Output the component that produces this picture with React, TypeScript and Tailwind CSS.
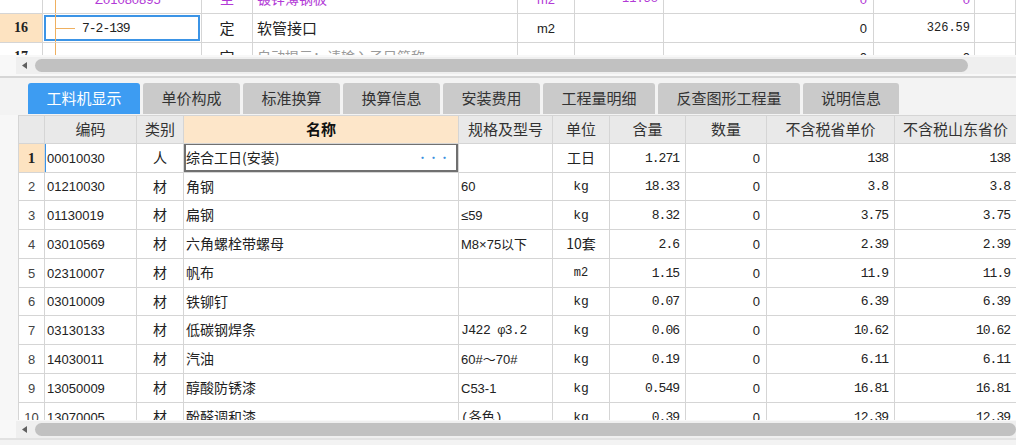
import React from "react";

const cjk = "font-['Noto_Sans_CJK_SC',sans-serif]";
const mono = "font-['Liberation_Mono','Noto_Sans_CJK_SC',monospace]";
const sans = "font-['Liberation_Sans','Noto_Sans_CJK_SC',sans-serif]";

const tabs = [
  { label: "工料机显示", w: "w-[112px]", active: true },
  { label: "单价构成", w: "w-[97px]" },
  { label: "标准换算", w: "w-[97px]" },
  { label: "换算信息", w: "w-[97px]" },
  { label: "安装费用", w: "w-[97px]" },
  { label: "工程量明细", w: "w-[112px]" },
  { label: "反查图形工程量", w: "w-[142px]" },
  { label: "说明信息", w: "w-[96px]" },
];

const rows = [
  ["00010030", "人", "综合工日(安装)", "", "工日", "1.271", "0", "138", "138"],
  ["01210030", "材", "角钢", "60", "kg", "18.33", "0", "3.8", "3.8"],
  ["01130019", "材", "扁钢", "≤59", "kg", "8.32", "0", "3.75", "3.75"],
  ["03010569", "材", "六角螺栓带螺母", "M8×75以下", "10套", "2.6", "0", "2.39", "2.39"],
  ["02310007", "材", "帆布", "", "m2", "1.15", "0", "11.9", "11.9"],
  ["03010009", "材", "铁铆钉", "", "kg", "0.07", "0", "6.39", "6.39"],
  ["03130133", "材", "低碳钢焊条", "J422 φ3.2", "kg", "0.06", "0", "10.62", "10.62"],
  ["14030011", "材", "汽油", "60#～70#", "kg", "0.19", "0", "6.11", "6.11"],
  ["13050009", "材", "醇酸防锈漆", "C53-1", "kg", "0.549", "0", "16.81", "16.81"],
  ["13070005", "材", "酚醛调和漆", "(各色)", "kg", "0.39", "0", "12.39", "12.39"],
];

const rowH = ["h-[29px]", "h-[28px]", "h-[29px]", "h-[29px]", "h-[29px]", "h-[28px]", "h-[29px]", "h-[29px]", "h-[29px]", "h-[29px]"];

const lowerCols =
  "grid grid-cols-[26px_92px_47px_275px_94px_57px_76px_81px_128px_122px]";
const upperCols =
  "grid grid-cols-[43px_159px_51px_265px_57px_89px_210px_101px_41px]";

const cell = "border-r border-b border-[#d5d5d5] flex items-center overflow-hidden whitespace-nowrap leading-none";
const lift = "pb-[2px]";

function ScrollBar({ thumbEnd }: { thumbEnd: string }) {
  return (
    <div className="flex h-[17px]">
      <div className="w-[16px] bg-[#f8f8f8]" />
      <div className="flex flex-1 items-center bg-[#efefef]">
        <svg width="19" height="17" viewBox="0 0 19 17" className="shrink-0">
          <path d="M6 8.5 L11 5 L11 12 Z" fill="#606060" />
        </svg>
        <div className={`h-[13px] rounded-[7px] bg-[#c1c1c1] ${thumbEnd}`} />
      </div>
    </div>
  );
}

function TreeLines({ h }: { h: "deep" | "mid" | "none" }) {
  return (
    <>
      <div className="absolute inset-y-0 left-[12px] border-l border-[#efb060]" />
      {h === "mid" && <div className="absolute left-[12px] top-[14px] w-[20px] border-t border-[#efb060]" />}
      {h === "deep" && <div className="absolute left-[25px] top-[14px] w-[15px] border-t border-[#efb060]" />}
    </>
  );
}

export default function App() {
  return (
    <div className={`h-[445px] w-[1016px] overflow-hidden bg-[#f3f3f3] ${cjk} text-[#222]`}>
      {/* upper grid */}
      <div className="h-[55px] overflow-hidden bg-white">
        <div className="mt-[-15px]">
          {/* row 15 (cut) */}
          <div className={`${upperCols} h-[29px] text-[#b23ad6]`}>
            <div className={`${cell} justify-center bg-white`} />
            <div className={`${cell} relative`}>
              <TreeLines h="deep" />
              <span className={`pl-[52px] text-[13px] ${sans}`}>Z01080895</span>
            </div>
            <div className={`${cell} ${lift} justify-center text-[14px]`}>主</div>
            <div className={`${cell} ${lift} pl-[4px] text-[14px]`}>镀锌薄钢板</div>
            <div className={`${cell} justify-center text-[13px] ${sans}`}>m2</div>
            <div className={`${cell} justify-end pr-[5px] text-[12px] ${mono}`}>11.38</div>
            <div className={`${cell} justify-end pr-[6px] text-[13px] ${sans}`}>0</div>
            <div className={`${cell} justify-end pr-[4px] text-[13px] ${sans}`}>0</div>
            <div className={`${cell}`} />
          </div>
          {/* row 16 */}
          <div className={`${upperCols} h-[29px]`}>
            <div className={`${cell} justify-center bg-[#fde3c1] text-[14px] font-bold font-['Liberation_Serif',serif]`}>16</div>
            <div className={`${cell} relative`}>
              <div className="absolute inset-x-[1px] inset-y-[1px] border-2 border-[#3b94e6]" />
              <TreeLines h="mid" />
              <span className={`pl-[39px] text-[13px] ${mono} tracking-[-1px]`}>7-2-139</span>
            </div>
            <div className={`${cell} ${lift} justify-center text-[15px]`}>定</div>
            <div className={`${cell} ${lift} pl-[4px] text-[15px]`}>软管接口</div>
            <div className={`${cell} justify-center text-[13px] ${sans}`}>m2</div>
            <div className={`${cell}`} />
            <div className={`${cell} justify-end pr-[6px] text-[13px] ${sans}`}>0</div>
            <div className={`${cell} justify-end pr-[4px] text-[12px] ${mono}`}>326.59</div>
            <div className={`${cell}`} />
          </div>
          {/* row 17 (cut) */}
          <div className={`${upperCols} h-[29px]`}>
            <div className={`${cell} justify-center text-[14px] font-bold font-['Liberation_Serif',serif]`}>17</div>
            <div className={`${cell} relative`}>
              <TreeLines h="none" />
            </div>
            <div className={`${cell} ${lift} justify-center text-[15px]`}>定</div>
            <div className={`${cell} ${lift} pl-[4px] text-[14px] text-[#9a9a9a]`}>自动提示：请输入子目简称</div>
            <div className={`${cell}`} />
            <div className={`${cell}`} />
            <div className={`${cell} justify-end pr-[6px] text-[13px] ${sans}`}>0</div>
            <div className={`${cell} justify-end pr-[4px] text-[13px] ${sans}`}>0</div>
            <div className={`${cell}`} />
          </div>
        </div>
      </div>

      <div className="h-[2px] bg-[#f8f8f8]" />
      <ScrollBar thumbEnd="w-[933px]" />
      <div className="h-[2px] bg-[#f8f8f8]" />
      <div className="h-[2px] bg-[#d6d6d6]" />

      {/* tabs */}
      <div className="flex gap-[3px] pl-[28px] pt-[5px]">
        {tabs.map((t) => (
          <div
            key={t.label}
            className={`${t.w} flex h-[31px] items-center justify-center rounded-t-[3px] text-[15px] ${
              t.active ? "bg-[#3d9cf2] text-white" : "bg-[#cacaca] text-[#333]"
            }`}
          >
            {t.label}
          </div>
        ))}
      </div>

      {/* lower grid */}
      <div className="mt-px flex">
        <div className="w-[18px] bg-[#f7f7f7]" />
        <div className="h-[305px] flex-1 overflow-hidden border-l border-t border-[#d5d5d5] bg-white">
          <div className={`${lowerCols} h-[28px] bg-[#e9e9e9] text-[15px] text-[#333]`}>
            <div className={`${cell}`} />
            <div className={`${cell} ${lift} justify-center`}>编码</div>
            <div className={`${cell} ${lift} justify-center`}>类别</div>
            <div className={`${cell} ${lift} justify-center bg-[#fde6c9] font-bold text-[#111]`}>名称</div>
            <div className={`${cell} ${lift} justify-center`}>规格及型号</div>
            <div className={`${cell} ${lift} justify-center`}>单位</div>
            <div className={`${cell} ${lift} justify-center`}>含量</div>
            <div className={`${cell} ${lift} justify-center`}>数量</div>
            <div className={`${cell} ${lift} justify-center`}>不含税省单价</div>
            <div className={`${cell} ${lift} justify-center`}>不含税山东省价</div>
          </div>
          {rows.map((r, i) => {
            const first = i === 0;
            const cjkUnit = /[\u4e00-\u9fff]/.test(r[4]);
            return (
              <div key={r[0]} className={`${lowerCols} ${rowH[i]}`}>
                <div
                  className={`${cell} justify-center ${
                    first
                      ? "bg-[#fde3c1] text-[15px] font-bold font-['Liberation_Serif',serif]"
                      : `text-[13px] text-[#444] ${sans}`
                  }`}
                >
                  {i + 1}
                </div>
                <div className={`${cell} relative pl-[2px] text-[13px] ${sans}`}>
                  {first && <div className="absolute left-0 top-0 bottom-0 w-px bg-[#3b94e6]" />}
                  {r[0]}
                </div>
                <div className={`${cell} ${lift} justify-center text-[14px]`}>{r[1]}</div>
                <div className={`${cell} ${lift} relative pl-[2px] text-[14px]`}>
                  {first && (
                    <>
                      <div className="absolute inset-x-0 top-[-1px] bottom-0 border-2 border-[#707070]" />
                      <span className="absolute right-[8px] top-[8px] text-[11px] text-[#3b8fe0]">•••</span>
                    </>
                  )}
                  {r[2]}
                </div>
                <div className={`${cell} pl-[2px] text-[13px] ${r[3].startsWith("J") || r[3].startsWith("(") ? mono : sans} ${r[3].startsWith("J") ? "tracking-[-0.5px]" : ""}`}>
                  {r[3]}
                </div>
                <div className={`${cell} justify-center ${cjkUnit ? `text-[14px] ${lift}` : r[4] === "m2" ? `text-[12px] ${mono}` : `text-[13px] ${mono}`}`}>
                  {r[4]}
                </div>
                <div className={`${cell} justify-end pr-[6px] text-[13px] tracking-[-1px] ${mono}`}>{r[5]}</div>
                <div className={`${cell} justify-end pr-[6px] text-[13px] ${sans}`}>{r[6]}</div>
                <div className={`${cell} justify-end pr-[6px] text-[13px] tracking-[-1px] ${mono}`}>{r[7]}</div>
                <div className={`${cell} justify-end pr-[6px] text-[13px] tracking-[-1px] ${mono}`}>{r[8]}</div>
              </div>
            );
          })}
        </div>
      </div>

      <div className="h-px bg-[#f8f8f8]" />
      <ScrollBar thumbEnd="flex-1" />
      <div className="h-[2px] bg-[#e2e2e2]" />
    </div>
  );
}
